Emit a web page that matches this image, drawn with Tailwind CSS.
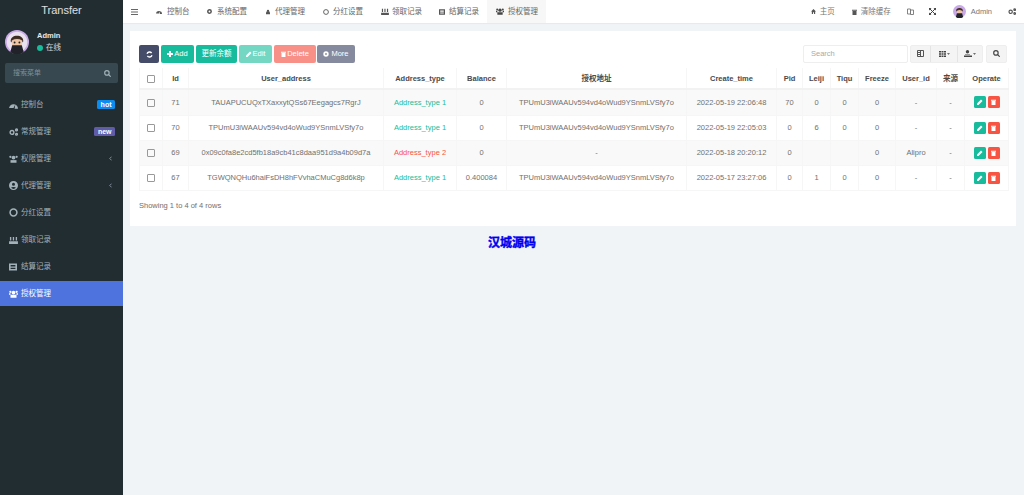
<!DOCTYPE html>
<html lang="en">
<head>
  <meta charset="UTF-8" />
  <title>Transfer</title>
  <script src="https://cdn.jsdelivr.net/npm/@tailwindcss/browser@4"></script>
</head>
<body class="relative h-[495px] w-[1024px] overflow-hidden flex bg-[#f1f4f6] text-[7.5px] text-[#666] font-['Liberation_Sans','Noto_Sans_CJK_SC',sans-serif]">

  <!-- Sidebar -->
  <aside class="w-[123px] shrink-0 bg-[#222d32] text-[#a3b2b9]">
    <div class="h-[21px] flex items-center justify-center text-[11px] text-white/85">Transfer</div>
    <div class="h-[42px] flex items-center pl-[5px] gap-[8px]">
      <svg class="w-[24px] h-[24px]" viewBox="0 0 25 25">
        <circle cx="12.500" cy="12.500" r="12.500" fill="#c9a9e6"/>
        <circle cx="12.500" cy="12.500" r="10.800" fill="#e9e2ee"/>
        <path d="M6 12c-1-8 14-8 13 0l-1 1v-2H7v2z" fill="#3d2a20"/>
        <rect x="7.500" y="9" width="10" height="9" rx="3" fill="#eec4a2"/>
        <path d="M7.500 8.500h10v2c-3-1.500-7-1.500-10 0z" fill="#3d2a20"/>
        <path d="M5.500 23a11 11 0 0 0 14 0l-2-7h-10z" fill="#22222a"/>
        <circle cx="10" cy="13" r="1" fill="#222"/><circle cx="15" cy="13" r="1" fill="#222"/>
      </svg>
      <div>
        <div class="font-bold text-[7.5px] text-white/90 leading-[12px]">Admin</div>
        <div class="flex items-center gap-[3px] text-white/80 leading-[12px]"><span class="w-[6px] h-[6px] rounded-full bg-[#18bc9c]"></span>在线</div>
      </div>
    </div>
    <div class="mx-[5px] h-[20px] rounded-[2px] bg-[#374850] flex items-center justify-between pl-[8px] pr-[7px] text-[#7d9099] text-[7px]">
      <span>搜索菜单</span>
      <svg class="w-[7px] h-[7px]" viewBox="0 0 12 12" fill="none" stroke="#a3b2b9" stroke-width="2"><circle cx="5" cy="5" r="3.800"/><path d="M8 8l3.500 3.500"/></svg>
    </div>

    <nav class="mt-[9px] flex flex-col gap-[2px] text-[7.5px]">
      <div class="h-[25px] flex items-center pl-[9px] pr-[8px]">
        <svg class="w-[9px] h-[8px] mr-[3px]" viewBox="0 0 12 10" fill="#a3b2b9"><path d="M0 10a6 6 0 0 1 12 0H7.500L8.500 4 6 9H0z"/></svg>
        <span class="flex-1">控制台</span>
        <span class="bg-[#0a8cf0] text-white font-bold text-[7px] leading-[8px] px-[3.500px] py-[0.5px] rounded-[1.500px]">hot</span>
      </div>
      <div class="h-[25px] flex items-center pl-[9px] pr-[8px]">
        <svg class="w-[9px] h-[8px] mr-[3px]" viewBox="0 0 12 10" fill="none" stroke="#a3b2b9" stroke-width="1.800"><circle cx="4" cy="5.500" r="2.500"/><circle cx="10" cy="2.200" r="1.200"/><circle cx="10" cy="8" r="1.200"/></svg>
        <span class="flex-1">常规管理</span>
        <span class="bg-[#605ca8] text-white font-bold text-[7px] leading-[8px] px-[3.500px] py-[0.5px] rounded-[1.500px]">new</span>
      </div>
      <div class="h-[25px] flex items-center pl-[9px] pr-[11px]">
        <svg class="w-[9px] h-[8px] mr-[3px]" viewBox="0 0 12 10" fill="#a3b2b9"><circle cx="6" cy="3" r="2.500"/><circle cx="1.800" cy="2" r="1.500"/><circle cx="10.200" cy="2" r="1.500"/><path d="M2 10V6.500h8V10z"/></svg>
        <span class="flex-1">权限管理</span>
        <svg class="w-[3px] h-[5px]" viewBox="0 0 4 6" fill="none" stroke="#a3b2b9"><path d="M3.500 .5L1 3l2.500 2.500"/></svg>
      </div>
      <div class="h-[25px] flex items-center pl-[9px] pr-[11px]">
        <svg class="w-[9px] h-[9px] mr-[3px]" viewBox="0 0 10 10" fill="#a3b2b9"><path fill-rule="evenodd" d="M5 0a5 5 0 1 1 0 10A5 5 0 0 1 5 0zm0 2a1.700 1.700 0 1 0 0 3.400A1.700 1.700 0 0 0 5 2zM2.300 7.600a3.600 3.600 0 0 0 5.400 0C7 6.500 3 6.500 2.300 7.600z"/></svg>
        <span class="flex-1">代理管理</span>
        <svg class="w-[3px] h-[5px]" viewBox="0 0 4 6" fill="none" stroke="#a3b2b9"><path d="M3.500 .5L1 3l2.500 2.500"/></svg>
      </div>
      <div class="h-[25px] flex items-center pl-[9px]">
        <svg class="w-[9px] h-[9px] mr-[3px]" viewBox="0 0 10 10" fill="none" stroke="#a3b2b9" stroke-width="1.700"><circle cx="5" cy="5" r="3.800"/></svg>
        <span>分红设置</span>
      </div>
      <div class="h-[25px] flex items-center pl-[9px]">
        <svg class="w-[9px] h-[8px] mr-[3px]" viewBox="0 0 10 9" fill="#a3b2b9"><path d="M0 6h10v3H0zM1 1h1.500v4H1zM4.200 1h1.500v4H4.200zM7.500 1H9v4H7.500z"/></svg>
        <span>领取记录</span>
      </div>
      <div class="h-[25px] flex items-center pl-[9px]">
        <svg class="w-[8px] h-[8px] mr-[4px]" viewBox="0 0 10 9" fill="#a3b2b9"><path fill-rule="evenodd" d="M0 0h10v9H0zM2 2v2h6V2zM2 5.500V7h6V5.500z"/></svg>
        <span>结算记录</span>
      </div>
      <div class="h-[25px] flex items-center pl-[9px] bg-[#4e73df] text-white">
        <svg class="w-[9px] h-[8px] mr-[3px]" viewBox="0 0 12 10" fill="#fff"><circle cx="6" cy="3" r="2.500"/><circle cx="1.800" cy="2" r="1.500"/><circle cx="10.200" cy="2" r="1.500"/><path d="M2 10V6h8v4zM0 4h2v2H0zM10 4h2v2h-2z"/></svg>
        <span>授权管理</span>
      </div>
    </nav>
  </aside>

  <div class="flex-1 min-w-0">
    <!-- Top bar -->
    <header class="h-[23px] bg-white flex items-center text-[7.5px] text-[#666] shadow-[0_1px_1px_rgba(0,0,0,0.04)]">
      <svg class="w-[7px] h-[6px] ml-[8px] mr-[18px]" viewBox="0 0 7 6" fill="#666"><path d="M0 0h7v1H0zM0 2.500h7v1H0zM0 5h7v1H0z"/></svg>
      <div class="flex items-center gap-[5px] w-[51px]"><svg class="w-[6px] h-[5px]" viewBox="0 0 12 10" fill="#555"><path d="M0 10a6 6 0 0 1 12 0H7.500L8.500 4 6 9H0z"/></svg>控制台</div>
      <div class="flex items-center gap-[5px] w-[59px]"><svg class="w-[5px] h-[5px]" viewBox="0 0 10 10" fill="none" stroke="#555" stroke-width="3"><circle cx="5" cy="5" r="3.400"/></svg>系统配置</div>
      <div class="flex items-center gap-[5px] w-[57px]"><svg class="w-[4px] h-[6px]" viewBox="0 0 6 7" fill="#555"><circle cx="3" cy="1.700" r="1.700"/><path d="M0 7V5a2 2 0 0 1 6 0v2z"/></svg>代理管理</div>
      <div class="flex items-center gap-[4px] w-[58px]"><svg class="w-[6px] h-[6px]" viewBox="0 0 10 10" fill="none" stroke="#555" stroke-width="1.500"><circle cx="5" cy="5" r="4"/></svg>分红设置</div>
      <div class="flex items-center gap-[3px] w-[58px]"><svg class="w-[8px] h-[7px]" viewBox="0 0 10 9" fill="#555"><path d="M0 6h10v3H0zM1 1h1.500v4H1zM4.200 1h1.500v4H4.200zM7.500 1H9v4H7.500z"/></svg>领取记录</div>
      <div class="flex items-center gap-[4px] w-[48px]"><svg class="w-[6px] h-[6px]" viewBox="0 0 10 9" fill="#555"><path fill-rule="evenodd" d="M0 0h10v9H0zM2 2v2h6V2zM2 5.500V7h6V5.500z"/></svg>结算记录</div>
      <div class="h-full flex items-center gap-[4px] bg-[#f7f7f7] pl-[9px] pr-[8px]"><svg class="w-[8px] h-[7px]" viewBox="0 0 12 10" fill="#444"><circle cx="6" cy="3" r="2.500"/><circle cx="1.800" cy="2" r="1.500"/><circle cx="10.200" cy="2" r="1.500"/><path d="M2 10V6h8v4zM0 4h2v2H0zM10 4h2v2h-2z"/></svg>授权管理</div>

      <div class="ml-auto flex items-center text-[#777]">
        <div class="flex items-center gap-[4px] mr-[17px]"><svg class="w-[5px] h-[5px]" viewBox="0 0 6 6" fill="#555"><path d="M3 0l3 3H5v3H3.600V4H2.400v2H1V3H0z"/></svg>主页</div>
        <div class="flex items-center gap-[4px] mr-[16px]"><svg class="w-[5px] h-[6px]" viewBox="0 0 5 6" fill="#555"><path d="M0 .7h5v1H0zM.5 2h4v4h-4z"/></svg>清除缓存</div>
        <svg class="w-[7px] h-[7px] mr-[15px]" viewBox="0 0 7 7" fill="none" stroke="#777" stroke-width=".9"><path d="M.5 1h3v5h-3zM3.500 2h3v4.500h-3z"/></svg>
        <svg class="w-[7px] h-[7px] mr-[17px]" viewBox="0 0 7 7" fill="#444"><path d="M0 0h2.500L0 2.500zM7 0v2.500L4.500 0zM0 7V4.500L2.500 7zM7 7H4.500L7 4.500z"/><path d="M1 1l5 5M6 1L1 6" stroke="#444"/></svg>
        <svg class="w-[13px] h-[13px] mr-[5px]" viewBox="0 0 25 25">
          <circle cx="12.500" cy="12.500" r="12.500" fill="#c9a9e6"/>
          <path d="M6 12c-1-8 14-8 13 0l-1 1v-2H7v2z" fill="#3d2a20"/>
          <rect x="7.500" y="9" width="10" height="9" rx="3" fill="#eec4a2"/>
          <path d="M7.500 8.500h10v2c-3-1.500-7-1.500-10 0z" fill="#3d2a20"/>
          <path d="M5.500 23a11 11 0 0 0 14 0l-2-7h-10z" fill="#22222a"/>
        </svg>
        <span class="mr-[16px]">Admin</span>
        <svg class="w-[8px] h-[7px] mr-[8px]" viewBox="0 0 12 10" fill="none" stroke="#555" stroke-width="1.800"><circle cx="4" cy="5.500" r="2.500"/><circle cx="10" cy="2.200" r="1.200"/><circle cx="10" cy="8" r="1.200"/></svg>
      </div>
    </header>

    <!-- Content -->
    <main class="pt-[8px] pl-[7px] pr-[8px]">
      <section class="bg-white h-[195px] px-[9px] pt-[14px]">
        <div class="flex items-center justify-between h-[18px] text-[7.5px]">
          <div class="flex text-white gap-[2px]">
            <span class="w-[20px] h-[18px] rounded-[2px] bg-[#444c69] flex items-center justify-center"><svg class="w-[7px] h-[7px]" viewBox="0 0 10 10" fill="none" stroke="#fff" stroke-width="2"><path d="M1.500 4A3.600 3.600 0 0 1 8 3M8.500 6A3.600 3.600 0 0 1 2 7"/></svg></span>
            <span class="w-[33px] h-[18px] rounded-[2px] bg-[#18bc9c] flex items-center justify-center gap-[1px]"><svg class="w-[6px] h-[6px]" viewBox="0 0 6 6" fill="#fff"><path d="M2 0h2v2h2v2H4v2H2V4H0V2h2z"/></svg>Add</span>
            <span class="w-[41px] h-[18px] rounded-[2px] bg-[#18bc9c] flex items-center justify-center">更新余额</span>
            <span class="w-[33px] h-[18px] rounded-[2px] bg-[#74d7c4] flex items-center justify-center gap-[1px]"><svg class="w-[6px] h-[6px]" viewBox="0 0 6 6" fill="#fff"><path d="M0 6V4.500L4 .5 5.500 2l-4 4z"/></svg>Edit</span>
            <span class="w-[42px] h-[18px] rounded-[2px] bg-[#f99087] flex items-center justify-center gap-[1px]"><svg class="w-[5px] h-[6px]" viewBox="0 0 5 6" fill="#fff"><path d="M0 .7h5v1H0zM.5 2h4v4h-4z"/></svg>Delete</span>
            <span class="w-[38px] h-[18px] -ml-[1px] rounded-[2px] bg-[#858a9f] flex items-center justify-center gap-[2px]"><svg class="w-[6px] h-[6px]" viewBox="0 0 10 10" fill="none" stroke="#fff" stroke-width="3"><circle cx="5" cy="5" r="3"/></svg>More</span>
          </div>
          <div class="flex items-center -mt-[1px]">
            <div class="w-[105px] h-[18px] border border-[#eee] rounded-[2px] pl-[7px] flex items-center text-[#aaa] text-[7.500px]">Search</div>
            <div class="ml-[2px] h-[18px] flex rounded-[2px] bg-[#f4f4f4] text-[#444] divide-x divide-[#e4e4e4] border border-[#eee]">
              <span class="w-[20px] flex items-center justify-center"><svg class="w-[7px] h-[7px]" viewBox="0 0 7 7" fill="none" stroke="#555"><path d="M.5 .5h6v6h-6zM3.500 .5v6M1 2.500h2M1 4.500h2"/></svg></span>
              <span class="w-[27px] flex items-center justify-center gap-[1px]"><svg class="w-[7px] h-[6px]" viewBox="0 0 7 6" fill="#444"><path d="M0 0h2v1.500H0zM2.500 0h2v1.500h-2zM5 0h2v1.500H5zM0 2.200h2v1.500H0zM2.500 2.200h2v1.500h-2zM5 2.200h2v1.500H5zM0 4.500h2V6H0zM2.500 4.500h2V6h-2zM5 4.500h2V6H5z"/></svg><svg class="w-[3px] h-[2px]" viewBox="0 0 4 2" fill="#444"><path d="M0 0h4L2 2z"/></svg></span>
              <span class="w-[24px] flex items-center justify-center gap-[1px]"><svg class="w-[8px] h-[7px]" viewBox="0 0 8 7" fill="#444"><circle cx="3.500" cy="1.700" r="1.700"/><path d="M1 4.500h5V5H1zM0 5.500h8V7H0z"/></svg><svg class="w-[3px] h-[2px]" viewBox="0 0 4 2" fill="#444"><path d="M0 0h4L2 2z"/></svg></span>
            </div>
            <span class="ml-[3px] w-[21px] h-[18px] rounded-[2px] bg-[#f4f4f4] border border-[#eee] flex items-center justify-center"><svg class="w-[7px] h-[7px]" viewBox="0 0 12 12" fill="none" stroke="#444" stroke-width="2"><circle cx="5" cy="5" r="3.800"/><path d="M8 8l3.500 3.500"/></svg></span>
          </div>
        </div>

        <table class="mt-[5px] w-[869px] table-fixed border-collapse text-center text-[7.5px] text-[#707070]">
          <colgroup>
            <col class="w-[23px]"><col class="w-[26px]"><col class="w-[195px]"><col class="w-[73px]"><col class="w-[50px]"><col class="w-[180px]"><col class="w-[90px]"><col class="w-[26px]"><col class="w-[28px]"><col class="w-[28px]"><col class="w-[37px]"><col class="w-[41px]"><col class="w-[28px]"><col class="w-[44px]">
          </colgroup>
          <thead class="text-[#4a4a4a]">
            <tr class="h-[21px] border-b-2 border-[#f2f2f2] [&>th]:border-x [&>th]:border-[#f6f6f6] [&>th]:font-bold [&>th]:pt-[1px]">
              <th><span class="inline-block align-middle w-[8px] h-[8px] border border-[#999] rounded-[1px]"></span></th>
              <th>Id</th><th>User_address</th><th>Address_type</th><th>Balance</th><th>授权地址</th><th>Create_time</th><th>Pid</th><th>Leiji</th><th>Tiqu</th><th>Freeze</th><th>User_id</th><th>来源</th><th>Operate</th>
            </tr>
          </thead>
          <tbody class="[&_td]:border [&_td]:border-[#f6f6f6]">
            <tr class="h-[26px] bg-[#f9f9f9]">
              <td><span class="inline-block align-middle w-[8px] h-[8px] border border-[#999] rounded-[1px]"></span></td>
              <td>71</td><td>TAUAPUCUQxTXaxxytQSs67Eegagcs7RgrJ</td><td class="text-[#18bc9c]">Address_type 1</td><td>0</td><td>TPUmU3iWAAUv594vd4oWud9YSnmLVSfy7o</td><td>2022-05-19 22:06:48</td><td>70</td><td>0</td><td>0</td><td>0</td><td>-</td><td>-</td>
              <td><span class="flex justify-center gap-[2px]"><span class="w-[12px] h-[12px] rounded-[1.500px] bg-[#18bc9c] flex items-center justify-center"><svg class="w-[6px] h-[6px]" viewBox="0 0 6 6" fill="#fff"><path d="M0 6V4.500L4 .5 5.500 2l-4 4z"/></svg></span><span class="w-[12px] h-[12px] rounded-[1.500px] bg-[#f75444] flex items-center justify-center"><svg class="w-[5px] h-[6px]" viewBox="0 0 5 6" fill="#fff"><path d="M0 .7h5v1H0zM.5 2h4v4h-4z"/></svg></span></span></td>
            </tr>
            <tr class="h-[25px] bg-white">
              <td><span class="inline-block align-middle w-[8px] h-[8px] border border-[#999] rounded-[1px]"></span></td>
              <td>70</td><td>TPUmU3iWAAUv594vd4oWud9YSnmLVSfy7o</td><td class="text-[#18bc9c]">Address_type 1</td><td>0</td><td>TPUmU3iWAAUv594vd4oWud9YSnmLVSfy7o</td><td>2022-05-19 22:05:03</td><td>0</td><td>6</td><td>0</td><td>0</td><td>-</td><td>-</td>
              <td><span class="flex justify-center gap-[2px]"><span class="w-[12px] h-[12px] rounded-[1.500px] bg-[#18bc9c] flex items-center justify-center"><svg class="w-[6px] h-[6px]" viewBox="0 0 6 6" fill="#fff"><path d="M0 6V4.500L4 .5 5.500 2l-4 4z"/></svg></span><span class="w-[12px] h-[12px] rounded-[1.500px] bg-[#f75444] flex items-center justify-center"><svg class="w-[5px] h-[6px]" viewBox="0 0 5 6" fill="#fff"><path d="M0 .7h5v1H0zM.5 2h4v4h-4z"/></svg></span></span></td>
            </tr>
            <tr class="h-[25px] bg-[#f9f9f9]">
              <td><span class="inline-block align-middle w-[8px] h-[8px] border border-[#999] rounded-[1px]"></span></td>
              <td>69</td><td>0x09c0fa8e2cd5fb18a9cb41c8daa951d9a4b09d7a</td><td class="text-[#f75444]">Address_type 2</td><td>0</td><td>-</td><td>2022-05-18 20:20:12</td><td>0</td><td></td><td></td><td>0</td><td>Alipro</td><td>-</td>
              <td><span class="flex justify-center gap-[2px]"><span class="w-[12px] h-[12px] rounded-[1.500px] bg-[#18bc9c] flex items-center justify-center"><svg class="w-[6px] h-[6px]" viewBox="0 0 6 6" fill="#fff"><path d="M0 6V4.500L4 .5 5.500 2l-4 4z"/></svg></span><span class="w-[12px] h-[12px] rounded-[1.500px] bg-[#f75444] flex items-center justify-center"><svg class="w-[5px] h-[6px]" viewBox="0 0 5 6" fill="#fff"><path d="M0 .7h5v1H0zM.5 2h4v4h-4z"/></svg></span></span></td>
            </tr>
            <tr class="h-[25px] bg-white">
              <td><span class="inline-block align-middle w-[8px] h-[8px] border border-[#999] rounded-[1px]"></span></td>
              <td>67</td><td>TGWQNQHu6haiFsDH8hFVvhaCMuCg8d6k8p</td><td class="text-[#18bc9c]">Address_type 1</td><td>0.400084</td><td>TPUmU3iWAAUv594vd4oWud9YSnmLVSfy7o</td><td>2022-05-17 23:27:06</td><td>0</td><td>1</td><td>0</td><td>0</td><td>-</td><td>-</td>
              <td><span class="flex justify-center gap-[2px]"><span class="w-[12px] h-[12px] rounded-[1.500px] bg-[#18bc9c] flex items-center justify-center"><svg class="w-[6px] h-[6px]" viewBox="0 0 6 6" fill="#fff"><path d="M0 6V4.500L4 .5 5.500 2l-4 4z"/></svg></span><span class="w-[12px] h-[12px] rounded-[1.500px] bg-[#f75444] flex items-center justify-center"><svg class="w-[5px] h-[6px]" viewBox="0 0 5 6" fill="#fff"><path d="M0 .7h5v1H0zM.5 2h4v4h-4z"/></svg></span></span></td>
            </tr>
          </tbody>
        </table>
        <p class="mt-[9px] text-[7.5px] text-[#707070]">Showing 1 to 4 of 4 rows</p>
      </section>
    </main>
  </div>

  <!-- Watermark over the page -->
  <div class="absolute left-[488px] top-[235px] text-[12px] leading-[16px] font-bold text-[#0000f0] [-webkit-text-stroke:0.4px_#0000f0]">汉城源码</div>
</body>
</html>
